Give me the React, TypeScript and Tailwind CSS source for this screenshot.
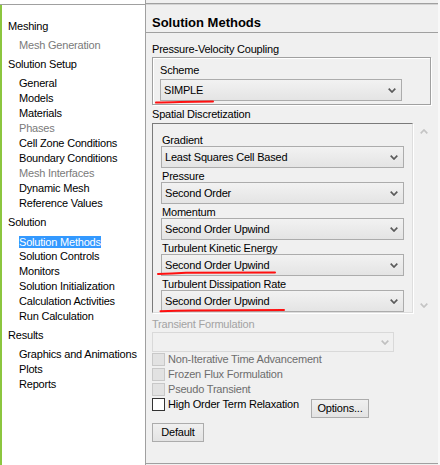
import React from "react";

type Item = { t: string; dis?: boolean; sel?: boolean };
const tree: { cat: string; items: Item[] }[] = [
  { cat: "Meshing", items: [{ t: "Mesh Generation", dis: true }] },
  {
    cat: "Solution Setup",
    items: [
      { t: "General" },
      { t: "Models" },
      { t: "Materials" },
      { t: "Phases", dis: true },
      { t: "Cell Zone Conditions" },
      { t: "Boundary Conditions" },
      { t: "Mesh Interfaces", dis: true },
      { t: "Dynamic Mesh" },
      { t: "Reference Values" },
    ],
  },
  {
    cat: "Solution",
    items: [
      { t: "Solution Methods", sel: true },
      { t: "Solution Controls" },
      { t: "Monitors" },
      { t: "Solution Initialization" },
      { t: "Calculation Activities" },
      { t: "Run Calculation" },
    ],
  },
  {
    cat: "Results",
    items: [{ t: "Graphics and Animations" }, { t: "Plots" }, { t: "Reports" }],
  },
];

function ChevronDown({ color = "#5a5a5a" }: { color?: string }) {
  return (
    <svg width="8" height="5" viewBox="0 0 8 5" className="shrink-0">
      <path d="M0.7 0.7 L4 4 L7.3 0.7" fill="none" stroke={color} strokeWidth="1.7" />
    </svg>
  );
}

function ChevronUp({ color = "#c4c4c4" }: { color?: string }) {
  return (
    <svg width="8" height="5" viewBox="0 0 8 5" className="shrink-0">
      <path d="M0.7 4.3 L4 1 L7.3 4.3" fill="none" stroke={color} strokeWidth="1.7" />
    </svg>
  );
}

function Combo({ value, wide }: { value: string; wide?: boolean }) {
  return (
    <div
      className={
        (wide ? "w-[243px] " : "w-[242px] ") +
        "h-[22px] border border-[#acacac] bg-gradient-to-b from-[#f2f2f2] to-[#e4e4e4] flex items-center justify-between pl-[3px] pr-[5px] text-black"
      }
    >
      <span className="leading-[20px]">{value}</span>
      <ChevronDown />
    </div>
  );
}

function Label({ children, cls = "" }: { children: React.ReactNode; cls?: string }) {
  return <div className={"h-[14px] leading-[16px] whitespace-nowrap " + cls}>{children}</div>;
}

function CheckRow({ label, enabled }: { label: string; enabled?: boolean }) {
  return (
    <div className="h-[15px] flex items-start leading-[15px]">
      <div
        className={
          "mt-[1px] w-[13px] h-[13px] shrink-0 border " +
          (enabled ? "bg-white border-[#333333]" : "bg-[#e2e2e2] border-[#c8c8c8]")
        }
      />
      <span className={"ml-[3px] whitespace-nowrap " + (enabled ? "text-black" : "text-[#6d6d6d]")}>{label}</span>
    </div>
  );
}

export default function App() {
  return (
    <div className="relative w-[440px] h-[465px] overflow-hidden flex bg-[#f0f0f0] text-[11px] tracking-[-0.2px] font-['Liberation_Sans',Arial,sans-serif] text-black">
      {/* Left navigation tree */}
      <div className="w-[146px] h-full bg-white border-r border-[#a0a0a0] pt-[4px] flex flex-col">
        <div className="flex-1 border-t border-[#a0a0a0]">
          <div className="h-full border-l-2 border-[#8cc63f] pt-[14px] pl-[6px]">
            {tree.map((g) => (
              <div key={g.cat}>
                <div className="h-[15px] leading-[15px] whitespace-nowrap">{g.cat}</div>
                <div className="mt-[4px] mb-[4px] pl-[11px]">
                  {g.items.map((it) => (
                    <div key={it.t} className="h-[15px] flex items-center whitespace-nowrap">
                      {it.sel ? (
                        <span className="inline-block h-[12px] leading-[12px] bg-[#3399ff] text-white">{it.t}</span>
                      ) : (
                        <span className={"leading-[15px] " + (it.dis ? "text-[#7a7a7a]" : "text-black")}>{it.t}</span>
                      )}
                    </div>
                  ))}
                </div>
              </div>
            ))}
          </div>
        </div>
      </div>

      {/* Right task page */}
      <div className="flex-1 h-full flex">
        <div className="w-[292px] mt-[3px] mb-[1px] border-t border-b border-[#a0a0a0] flex flex-col">
          <div className="flex-1 border-t border-[#d4d4d4]">
            <div className="h-[28px] border-b border-[#a0a0a0] pt-[10px] pl-[6px] text-[13px] leading-[16px] font-bold tracking-normal">
              Solution Methods
            </div>
            <div className="pl-[6px]">
              <Label cls="mt-[8px]">Pressure-Velocity Coupling</Label>
              <div className="mt-[2px] w-[279px] border border-[#a0a0a0] shadow-[1px_1px_0_0_#ffffff,inset_1px_1px_0_0_#ffffff] pt-[4px] pl-[7px] pb-[3px]">
                <Label>Scheme</Label>
                <div className="mt-[3px]">
                  <Combo value="SIMPLE" />
                </div>
              </div>

              <Label cls="mt-[1px]">Spatial Discretization</Label>
              <div className="mt-[3px] flex">
                <div className="w-[261px] h-[190px] overflow-hidden border border-t-[#7a7a7a] border-l-[#7a7a7a] border-r-[#dedede] border-b-[#dedede] shadow-[1px_1px_0_0_#ffffff] pt-[8px] pl-[8px]">
                  <Label cls="pl-[1px]">Gradient</Label>
                  <Combo value="Least Squares Cell Based" wide />
                  <Label cls="pl-[1px]">Pressure</Label>
                  <Combo value="Second Order" wide />
                  <Label cls="pl-[1px]">Momentum</Label>
                  <Combo value="Second Order Upwind" wide />
                  <Label cls="pl-[1px]">Turbulent Kinetic Energy</Label>
                  <Combo value="Second Order Upwind" wide />
                  <Label cls="pl-[1px]">Turbulent Dissipation Rate</Label>
                  <Combo value="Second Order Upwind" wide />
                </div>
                <div className="w-[24px] h-[190px] flex flex-col justify-between pt-[6px] pb-[5px] pl-[7px]">
                  <ChevronUp />
                  <ChevronDown color="#c4c4c4" />
                </div>
              </div>

              <Label cls="mt-[3px] text-[#a3a3a3]">Transient Formulation</Label>
              <div className="mt-[2px] w-[242px] h-[20px] border border-[#d9d9d9] bg-[#f0f0f0] flex items-center justify-end pr-[4px]">
                <ChevronDown color="#c0c0c0" />
              </div>

              <CheckRow label="Non-Iterative Time Advancement" />
              <CheckRow label="Frozen Flux Formulation" />
              <CheckRow label="Pseudo Transient" />
              <div className="flex items-start">
                <div className="w-[159px]">
                  <CheckRow label="High Order Term Relaxation" enabled />
                </div>
                <div className="mt-[2px] w-[58px] h-[19px] border border-[#acacac] bg-gradient-to-b from-[#f0f0f0] to-[#e3e3e3] flex items-center justify-center leading-[17px]">
                  Options...
                </div>
              </div>
              <div className="mt-[5px] w-[52px] h-[19px] border border-[#acacac] bg-gradient-to-b from-[#f0f0f0] to-[#e3e3e3] flex items-center justify-center leading-[17px]">
                Default
              </div>
            </div>
          </div>
        </div>
        <div className="flex-1 bg-[#f8f8f8]" />
      </div>

      {/* Red hand-drawn underlines */}
      <svg className="absolute inset-0 pointer-events-none" width="440" height="465" viewBox="0 0 440 465">
        <path d="M156 102.6 Q 175 101.8 213 101.4" fill="none" stroke="#ff1010" strokeWidth="2" strokeLinecap="round" />
        <path d="M158 274 Q 172 273.6 186 272.7 L 275 272.4" fill="none" stroke="#ff1010" strokeWidth="2" strokeLinecap="round" />
        <path d="M160.5 311.2 Q 176 310.7 192 310.4 L 284 310.1" fill="none" stroke="#ff1010" strokeWidth="2" strokeLinecap="round" />
      </svg>
    </div>
  );
}
